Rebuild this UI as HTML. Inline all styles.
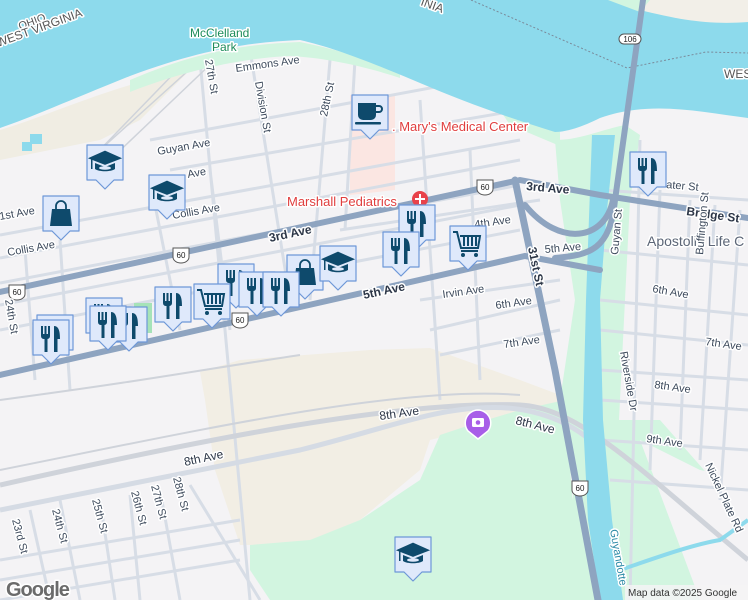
<!DOCTYPE html>
<html><head><meta charset="utf-8"><style>
html,body{margin:0;padding:0;width:748px;height:600px;overflow:hidden;background:#f4f3f5}
svg{display:block}
text{font-family:"Liberation Sans",sans-serif;paint-order:stroke;stroke:#fff;stroke-width:3px;stroke-linejoin:round}
.l{font-size:11px;fill:#3d4a5c}
.b{font-size:12px;fill:#2d3748;font-weight:bold}
</style></head><body>
<svg width="748" height="600" viewBox="0 0 748 600" xmlns="http://www.w3.org/2000/svg">
<defs>
<g id="mk"><path d="M-18,-18h36v35h-9l-9,9l-9,-9h-9z" fill="#dfe9fb" stroke="#6d97d8" stroke-width="1.2" stroke-linejoin="round"/></g>
<g id="fork"><use href="#mk"/><g fill="#0e4a6c"><path d="M-10,-12h2v8h1.5v-8h2v8h1.5v-8h2v10a3,3 0 0 1 -2.5,3v13h-3v-13a3,3 0 0 1 -3.5,-3z"/><path d="M3,-12c5,0 6,6 6,13h-2.5v13h-3.5z"/></g></g>
<g id="cap"><use href="#mk"/><g fill="#0e4a6c"><path d="M-18,-5l18,-8l18,8l-18,7z" transform="scale(0.95)"/><path d="M-10,0v6c4,3 16,3 20,0v-6l-10,4z"/><rect x="-14" y="-4" width="1.5" height="10"/></g><ellipse cx="0" cy="5" rx="6" ry="1.8" fill="#dfe9fb"/></g>
<g id="bag"><use href="#mk"/><g fill="#0e4a6c"><path d="M-9,-5h18l2,17h-22z"/><path d="M-5,-5v-3a5,5 0 0 1 10,0v3" fill="none" stroke="#0e4a6c" stroke-width="1.8"/></g></g>
<g id="cart"><use href="#mk"/><g fill="none" stroke="#0e4a6c" stroke-width="2"><path d="M-15,-12h4l4,16h17l2,-12h-20"/><path d="M-4,-8v10M0,-8v10M4,-8v10M8,-8v10"/><path d="M-7,7h17"/></g><circle cx="-5" cy="11" r="2" fill="#0e4a6c"/><circle cx="8" cy="11" r="2" fill="#0e4a6c"/></g>
<g id="cup"><use href="#mk"/><g fill="#0e4a6c"><path d="M-12,-10h18v12a5,5 0 0 1 -5,5h-8a5,5 0 0 1 -5,-5z"/><path d="M6,-8h3a4,4 0 0 1 0,8h-3v-2h3a2,2 0 0 0 0,-4h-3z"/><rect x="-15" y="9" width="26" height="2.5" rx="1"/></g></g>
<g id="s60"><path d="M-8,-7h16v9a8,6 0 0 1 -8,6a8,6 0 0 1 -8,-6z" fill="#fff" stroke="#555" stroke-width="1"/><text x="0" y="3" font-size="8" text-anchor="middle" style="stroke:none;fill:#222">60</text></g>
</defs>
<rect width="748" height="600" fill="#f4f3f5"/>
<path d="M350,95L395,95L395,190L350,195Z" fill="#fbe6e2"/>
<path d="M0,130C40,118 80,100 130,85L200,60L140,120L100,140L0,160Z" fill="#f0ede3"/>
<path d="M555,140C580,140 600,130 625,125L640,135L630,200L610,600H560L575,480L560,400L575,300L560,200Z" fill="#d2f5e0"/>
<path d="M610,420L660,420L748,520V600H610Z" fill="#d2f5e0"/>
<path d="M640,440L700,600H748V480L700,470Z" fill="#f4f3f5"/>
<path d="M200,372L240,360L370,350L430,348L520,380L560,395L560,420L470,430L430,440L420,470L360,520L300,545L240,545L215,470L205,400Z" fill="#f2eee4"/>
<path d="M250,545L310,540L360,520L420,480L440,435L470,425L520,410L565,400L580,600H270L250,570Z" fill="#d2f5e0"/>
<g stroke="#d7dde6" stroke-width="3" fill="none">
<path d="M0,235L520,140M0,258L520,160M0,283L520,185M0,305L520,205M0,330L520,230"/>
<path d="M150,140L500,75M170,170L520,110M340,230L540,200M420,300L560,280M430,330L560,300M440,355L560,330"/>
<path d="M200,60L250,600M250,50L290,300M330,60L310,300M420,100L440,400M470,150L480,380M25,250L35,380M60,240L70,390M150,180L180,330M210,170L230,330M355,60L345,230"/>
<path d="M600,190L748,200M600,250L748,265M600,300L748,315M600,330L748,345M600,370L748,380M600,400L748,410M600,440L748,450M610,480L748,490"/>
<path d="M640,140L630,600M660,190L650,470M690,200L680,450M715,205L700,460M740,210L720,500"/>
<path d="M0,560L240,520M0,580L240,540M0,600L240,560M30,510L50,600M60,500L80,600M100,500L115,600M130,495L140,600M160,490L180,600M190,485L260,600"/>
</g>
<g stroke="#cfd3da" fill="none">
<path d="M0,485C200,440 400,400 520,405C580,408 640,470 748,560" stroke-width="5"/>
<path d="M0,470C200,430 400,385 520,395" stroke-width="2"/>
<path d="M0,400C150,380 200,370 300,355" stroke-width="2"/>
<path d="M100,150L200,60M90,160L185,62M110,160L215,60" stroke-width="1.5"/>
</g>
<path d="M0,510C100,490 200,470 300,450C380,430 430,410 480,408C520,405 560,415 590,440" stroke="#d5dbe4" stroke-width="5" fill="none"/>
<path d="M130,80C200,50 250,44 300,42C340,50 370,60 400,72L400,78C370,68 330,58 290,56C240,58 180,72 130,92Z" fill="#d2f5e0"/>
<path d="M500,110L560,132L560,146L510,125Z" fill="#d2f5e0"/>
<path d="M0,0H748V118C700,112 650,100 600,118C580,128 565,132 555,132C500,115 460,100 420,83C370,62 335,48 300,40C250,42 200,50 130,76C70,100 30,118 0,128Z" fill="#8ddaec"/>
<path d="M640,0H748V22C710,25 680,20 640,10Z" fill="#f2efe8"/>
<path d="M608,0H650L640,12Z" fill="#d2f5e0"/>
<rect x="30" y="134" width="12" height="10" fill="#8ddaec"/><rect x="22" y="142" width="10" height="9" fill="#8ddaec"/>
<path d="M471,0L627,68L706,52L748,53" stroke="#7a8a9a" stroke-width="1" stroke-dasharray="2,2" fill="none"/>
<path d="M592,135L615,135L607,210L600,300L603,420L612,520L623,600H600L588,520L583,420L586,300Z" fill="#8ddaec"/>
<path d="M620,570C650,560 690,545 720,540L748,520" stroke="#8ddaec" stroke-width="4" fill="none"/>
<g stroke="#8ea4c0" fill="none" stroke-linecap="round">
<path d="M0,292L520,180L600,195L748,218" stroke-width="6"/>
<path d="M0,375L525,256L600,270" stroke-width="6"/>
<path d="M515,180L555,370L598,600" stroke-width="7"/>
<path d="M643,0L615,200C610,250 590,255 555,258M613,200C605,240 560,248 525,205" stroke-width="6"/>
</g>
<use href="#s60" x="485" y="187"/><use href="#s60" x="181" y="255"/><use href="#s60" x="17" y="292"/><use href="#s60" x="240" y="320"/><use href="#s60" x="580" y="488"/>
<path d="M624,34h12a5,5 0 0 1 0,10h-12a5,5 0 0 1 0,-10z" fill="#fff" stroke="#555"/><text x="630" y="42" font-size="8" text-anchor="middle" style="stroke:none;fill:#222">106</text>
<text transform="translate(20,30) rotate(-20)" style="font-size:11px;fill:#555">OHIO</text>
<text transform="translate(-2,47) rotate(-20)" style="font-size:12px;fill:#555">WEST VIRGINIA</text>
<text transform="translate(420,5) rotate(20)" style="font-size:12px;fill:#555">INIA</text>
<text x="724" y="78" style="font-size:12px;fill:#555">WES</text>
<text x="190" y="37" style="font-size:12px;fill:#1e8c5a">McClelland</text>
<text x="212" y="51" style="font-size:12px;fill:#1e8c5a">Park</text>
<text class="l" transform="translate(236,72) rotate(-8)">Emmons Ave</text>
<text class="l" transform="translate(205,60) rotate(80)">27th St</text>
<text class="l" transform="translate(255,82) rotate(80)">Division St</text>
<text class="l" transform="translate(327,117) rotate(-78)">28th St</text>
<text class="l" transform="translate(158,155) rotate(-10)">Guyan Ave</text>
<text class="l" transform="translate(188,178) rotate(-10)">Ave</text>
<text class="l" transform="translate(173,219) rotate(-10)">Collis Ave</text>
<text class="l" transform="translate(0,220) rotate(-10)">1st Ave</text>
<text class="l" transform="translate(8,256) rotate(-10)">Collis Ave</text>
<text class="b" transform="translate(270,242) rotate(-12)">3rd Ave</text>
<text class="b" transform="translate(364,299) rotate(-12)">5th Ave</text>
<text class="b" transform="translate(526,190) rotate(5)">3rd Ave</text>
<text class="b" transform="translate(686,215) rotate(8)">Bridge St</text>
<text class="l" x="647" y="246" style="font-size:14px;fill:#5c6677">Apostolic Life C</text>
<text style="font-size:13px;fill:#e03e3e" x="392" y="131">. Mary's Medical Center</text>
<text style="font-size:13px;fill:#e03e3e" x="287" y="206">Marshall Pediatrics</text>
<circle cx="420" cy="199" r="8" fill="#e8424a"/><path d="M420,194v10M415,199h10" stroke="#fff" stroke-width="2"/>
<text class="l" transform="translate(443,298) rotate(-8)">Irvin Ave</text>
<text class="l" transform="translate(496,309) rotate(-8)">6th Ave</text>
<text class="l" transform="translate(504,348) rotate(-8)">7th Ave</text>
<text class="l" transform="translate(545,253) rotate(-5)">5th Ave</text>
<text class="l" transform="translate(475,228) rotate(-8)">4th Ave</text>
<text class="b" transform="translate(528,248) rotate(78)">31st St</text>
<text class="l" transform="translate(618,255) rotate(-85)">Guyan St</text>
<text class="l" transform="translate(652,292) rotate(10)">6th Ave</text>
<text class="l" transform="translate(705,345) rotate(8)">7th Ave</text>
<text class="l" transform="translate(654,388) rotate(8)">8th Ave</text>
<text class="l" transform="translate(646,442) rotate(8)">9th Ave</text>
<text class="l" transform="translate(666,188) rotate(5)">ater St</text>
<text class="l" transform="translate(703,255) rotate(-85)" >Buffington St</text>
<text class="l" transform="translate(620,352) rotate(80)">Riverside Dr</text>
<text class="l" transform="translate(705,465) rotate(65)">Nickel Plate Rd</text>
<text class="l" transform="translate(610,530) rotate(80)" style="fill:#2c8aa6">Guyandotte</text>
<text class="b" transform="translate(380,420) rotate(-8)" style="font-weight:normal;font-size:12px">8th Ave</text>
<text class="b" transform="translate(515,424) rotate(14)" style="font-weight:normal;font-size:12px">8th Ave</text>
<text class="b" transform="translate(185,466) rotate(-12)" style="font-weight:normal;font-size:12px">8th Ave</text>
<text class="l" transform="translate(5,300) rotate(80)">24th St</text>
<text class="l" transform="translate(12,520) rotate(75)">23rd St</text>
<text class="l" transform="translate(52,510) rotate(75)">24th St</text>
<text class="l" transform="translate(92,500) rotate(75)">25th St</text>
<text class="l" transform="translate(131,492) rotate(75)">26th St</text>
<text class="l" transform="translate(151,486) rotate(75)">27th St</text>
<text class="l" transform="translate(173,478) rotate(75)">28th St</text>
<use href="#cup" x="370" y="113"/>
<use href="#cap" x="105" y="163"/><use href="#cap" x="167" y="193"/>
<use href="#bag" x="61" y="214"/>
<use href="#fork" x="417" y="223"/><use href="#fork" x="401" y="250"/>
<use href="#cart" x="468" y="244"/>
<use href="#fork" x="648" y="170"/>
<use href="#bag" x="305" y="273"/><use href="#cap" x="338" y="264"/>
<use href="#fork" x="236" y="282"/><use href="#fork" x="257" y="290"/><use href="#fork" x="281" y="290"/>
<use href="#cart" x="212" y="302"/>
<rect x="134" y="303" width="18" height="30" fill="#a6e3b8"/>
<use href="#fork" x="173" y="305"/>
<use href="#fork" x="104" y="316"/><use href="#fork" x="129" y="325"/><use href="#fork" x="108" y="324"/>
<use href="#fork" x="55" y="333"/><use href="#fork" x="51" y="338"/>
<use href="#cap" x="413" y="555"/>
<path d="M478,410a13,13 0 0 1 10,21l-10,8l-10,-8a13,13 0 0 1 10,-21z" fill="#a85ee8" stroke="#fff" stroke-width="1.5"/>
<rect x="472" y="418" width="12" height="9" rx="1.5" fill="#fff"/><circle cx="478" cy="422.5" r="2.3" fill="#a85ee8"/>
<text x="6" y="596" style="font-size:20px;fill:#6b6b6b;stroke-width:3px;font-weight:bold;letter-spacing:-1px">Google</text>
<rect x="625" y="585" width="123" height="15" fill="#f4f3f5" opacity=".85"/>
<text x="628" y="596" style="font-size:10px;fill:#333;stroke:none">Map data ©2025 Google</text>
</svg>
</body></html>
